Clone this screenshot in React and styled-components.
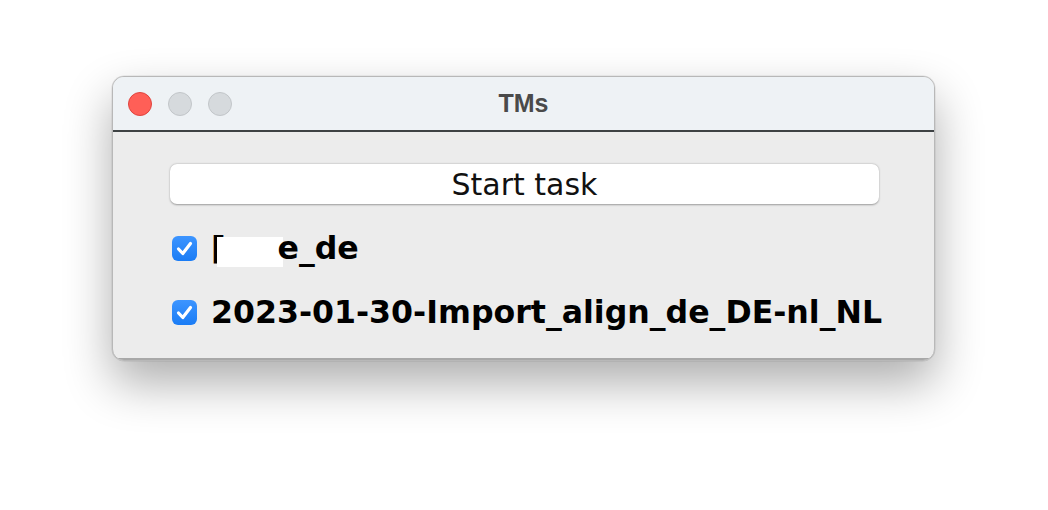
import React from 'react';
import styled, { createGlobalStyle } from 'styled-components';

const Global = createGlobalStyle`
    html, body {
        margin: 0;
        padding: 0;
        background: #ffffff;
    }
`;

const Page = styled.div`
    width: 1048px;
    height: 510px;
    box-sizing: border-box;
    padding: 76px 0 0 112px;
    background: #ffffff;
`;

const Window = styled.div`
    width: 823px;
    height: 285px;
    box-sizing: border-box;
    border-radius: 12px;
    overflow: hidden;
    display: flex;
    flex-direction: column;
    background: #ececec;
    border: 1px solid #b8b8b8;
    box-shadow: 0 22px 48px rgba(0, 0, 0, 0.32), 0 0 0 0.5px rgba(0, 0, 0, 0.1);
`;

const TitleBar = styled.div`
    height: 53px;
    flex: none;
    background: #eef2f5;
    border-bottom: 2px solid #3e4244;
    display: flex;
    align-items: center;
    position: relative;
    padding-left: 15px;
    gap: 16px;
`;

const Light = styled.div`
    width: 24px;
    height: 24px;
    box-sizing: border-box;
    border-radius: 50%;
    background: ${p => p.color};
    border: 1px solid ${p => p.edge};
`;

const Title = styled.div`
    position: absolute;
    left: 0;
    right: 0;
    text-align: center;
    font-family: "Liberation Sans", Arial, sans-serif;
    font-weight: bold;
    font-size: 25px;
    color: #4a4a4a;
`;

const Body = styled.div`
    flex: 1;
    display: flex;
    flex-direction: column;
    padding: 32px 56px 0 57px;
    border-bottom: 2px solid #a8a8a8;
`;

const StartBtn = styled.button`
    height: 40px;
    width: 709px;
    flex: none;
    border: none;
    border-radius: 7px;
    background: #ffffff;
    box-shadow: 0 0.5px 2px rgba(0, 0, 0, 0.35);
    font-family: "DejaVu Sans", sans-serif;
    font-size: 30px;
    color: #111;
    padding: 0;
    margin-bottom: 12px;
`;

const Row = styled.label`
    display: flex;
    align-items: center;
    height: 64px;
    flex: none;
    gap: 14px;
    padding-left: 2px;
    font-family: "DejaVu Sans", sans-serif;
    font-weight: bold;
    font-size: 31.6px;
    color: #000;
    white-space: nowrap;
`;

const Box = styled.span`
    width: 25px;
    height: 25px;
    flex: none;
    border-radius: 6px;
    background: linear-gradient(#3d95ff, #1a7cf5);
    display: flex;
    align-items: center;
    justify-content: center;
`;

const Mask = styled.span`
    display: inline-block;
    width: 66px;
    height: 30px;
    background: #ffffff;
    vertical-align: -8px;
    margin-left: -8px;
    margin-right: -6px;
`;

const Check = () => (
    <Box>
        <svg width="19" height="19" viewBox="0 0 19 19">
            <path d="M3.5 10 L7.8 14.5 L15.5 4.5" fill="none" stroke="#fff" strokeWidth="3.2" strokeLinecap="round" strokeLinejoin="round" />
        </svg>
    </Box>
);

export default function App() {
    return (
        <Page>
            <Global />
            <Window>
                <TitleBar>
                    <Light color="#ff5f57" edge="#e0443e" />
                    <Light color="#d6dadd" edge="#c2c6c9" />
                    <Light color="#d6dadd" edge="#c2c6c9" />
                    <Title>TMs</Title>
                </TitleBar>
                <Body>
                    <StartBtn>Start task</StartBtn>
                    <Row>
                        <Check />
                        <span>[<Mask />e_de</span>
                    </Row>
                    <Row>
                        <Check />
                        <span>2023-01-30-Import_align_de_DE-nl_NL</span>
                    </Row>
                </Body>
            </Window>
        </Page>
    );
}
